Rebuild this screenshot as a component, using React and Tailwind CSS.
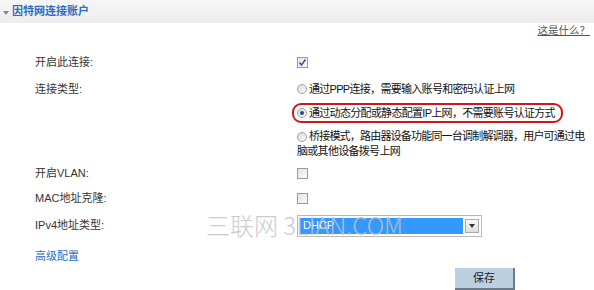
import React from "react";

const F = { fontFamily: '"Liberation Sans", "Noto Sans CJK SC", sans-serif' };

function Check({ checked }) {
  return (
    <span className="inline-flex h-[11px] w-[11px] items-center justify-center border border-[#9a9a9a] bg-gradient-to-br from-[#e4e4e4] to-[#fafafa]">
      {checked && (
        <svg width="9" height="9" viewBox="0 0 9 9">
          <path d="M1.5 4.5 L3.5 7 L7.5 1.5" stroke="#2b4f8f" strokeWidth="1.4" fill="none" />
        </svg>
      )}
    </span>
  );
}

function Radio({ checked }) {
  return (
    <span className="inline-flex h-[10px] w-[10px] shrink-0 items-center justify-center rounded-full border border-[#a0a0a0] bg-gradient-to-br from-[#dcdcdc] to-[#f8f8f8]">
      {checked && <span className="h-[4px] w-[4px] rounded-full bg-[#2a4a80]" />}
    </span>
  );
}

export default function App() {
  return (
    <div className="relative h-[290px] w-[594px] overflow-hidden bg-white text-[11px] text-[#333]" style={F}>
      <div className="flex h-[23px] items-center bg-gradient-to-b from-[#f6f6f6] to-[#ededed] pl-[3px]">
        <svg width="6" height="4" viewBox="0 0 6 4" className="mr-[3px] mt-[2px]">
          <path d="M0 0 L6 0 L3 4 Z" fill="#7a8aa0" />
        </svg>
        <span className="text-[11px] font-bold text-[#2f6cc2]">因特网连接账户</span>
      </div>
      <div className="flex h-[14px] justify-end pr-[4px] pt-[1px]">
        <span className="text-[10.5px] leading-[13px] text-[#555] underline">这是什么？</span>
      </div>

      <div className="grid grid-cols-[262px_1fr] pl-[35px] pt-[12px] whitespace-nowrap">
        <div className="flex h-[26px] items-center">开启此连接:</div>
        <div className="flex h-[26px] items-center"><Check checked /></div>

        <div className="flex h-[26px] items-center pt-[2px]">连接类型:</div>
        <div className="flex h-[26px] items-center gap-[2px] pt-[2px] text-[#111]"><Radio /><span className="tracking-[-0.7px]">通过PPP连接，需要输入账号和密码认证上网</span></div>

        <div className="h-[24px]" />
        <div className="relative flex h-[24px] items-center gap-[2px] text-[#111]">
          <span className="absolute left-[-5px] top-[2px] h-[20px] w-[271px] rounded-[9px] border-2 border-[#d0161c]" />
          <Radio checked /><span className="tracking-[-0.7px]">通过动态分配或静态配置IP上网，不需要账号认证方式</span>
        </div>

        <div className="h-[36px]" />
        <div className="flex h-[36px] flex-col pt-[4px] text-[#111]">
          <div className="flex items-center gap-[2px] leading-[15px]"><Radio /><span className="tracking-[-0.8px]">桥接模式，路由器设备功能同一台调制解调器，用户可通过电</span></div>
          <div className="leading-[15px] tracking-[-0.7px]">脑或其他设备拨号上网</div>
        </div>

        <div className="flex h-[24px] items-center">开启VLAN:</div>
        <div className="flex h-[24px] items-center"><Check /></div>

        <div className="flex h-[27px] items-center">MAC地址克隆:</div>
        <div className="flex h-[27px] items-center"><Check /></div>

        <div className="flex h-[27px] items-center">IPv4地址类型:</div>
        <div className="flex h-[27px] items-center">
          <div className="flex h-[22px] w-[185px] items-center border border-[#b9b9b9] bg-white p-[2px]">
            <div className="flex h-full flex-1 items-center bg-[#3399ff] pl-[3px] text-[11px] text-white">DHCP</div>
            <div className="ml-[2px] flex h-[14px] w-[14px] items-center justify-center border border-[#aaa] bg-gradient-to-b from-[#fafafa] to-[#dedede]">
              <svg width="6" height="4" viewBox="0 0 6 4"><path d="M0 0 L6 0 L3 4 Z" fill="#333" /></svg>
            </div>
          </div>
        </div>

        <div className="flex h-[29px] items-center pt-[6px] text-[#2f6cc2]">高级配置</div>
        <div className="h-[29px]" />
      </div>

      <div className="flex justify-start pl-[455px]">
        <div className="flex h-[22px] w-[60px] items-center justify-center border-b-2 border-r-2 border-[#6b7b8b] bg-[#bcd0e2] text-[11px] text-[#222]">保存</div>
      </div>

      <div
        className="pointer-events-none absolute left-[206px] top-[209px] text-[24px] leading-[32px] text-[#c4c4c4]"
        style={{ fontFamily: '"Noto Sans CJK SC", "Liberation Sans", sans-serif', fontWeight: 300, opacity: 0.85 }}
      >
        三联网 3LIAN.COM
      </div>
    </div>
  );
}
